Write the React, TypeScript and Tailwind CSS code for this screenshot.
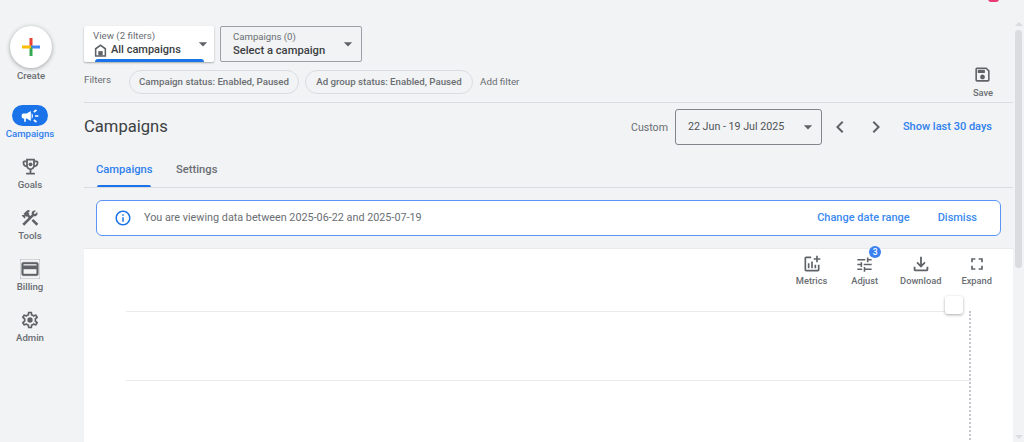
import React from "react";
import {
  MdCampaign,
  MdConstruction,
  MdOutlineCreditCard,
  MdOutlineSave,
  MdOutlineInfo,
  MdOutlineAddchart,
  MdOutlineTune,
  MdOutlineFileDownload,
  MdFullscreen,
  MdChevronLeft,
  MdChevronRight,
  MdArrowDropDown,
} from "react-icons/md";

const font = { fontFamily: "Roboto, sans-serif" };

function Trophy() {
  return (
    <svg width="21" height="21" viewBox="0 0 24 24" fill="currentColor">
      <path d="M19 5h-2V3H7v2H5c-1.1 0-2 .9-2 2v1c0 2.55 1.92 4.63 4.39 4.94.63 1.5 1.98 2.63 3.61 2.96V19H7v2h10v-2h-4v-3.1c1.63-.33 2.98-1.46 3.61-2.96C19.08 12.63 21 10.55 21 8V7c0-1.1-.9-2-2-2zM5 8V7h2v3.82C5.84 10.4 5 9.3 5 8zm7 6c-1.65 0-3-1.35-3-3V5h6v6c0 1.65-1.35 3-3 3zm7-6c0 1.3-.84 2.4-2 2.82V7h2v1z" />
      <circle cx="12" cy="9.5" r="2.2" />
    </svg>
  );
}

function Gear() {
  return (
    <svg width="20" height="20" viewBox="0 0 24 24" fill="currentColor">
      <path d="M19.43 12.98c.04-.32.07-.64.07-.98 0-.34-.03-.66-.07-.98l2.11-1.65c.19-.15.24-.42.12-.64l-2-3.46c-.09-.16-.26-.25-.44-.25-.06 0-.12.01-.17.03l-2.49 1c-.52-.4-1.08-.73-1.69-.98l-.38-2.65C14.46 2.18 14.25 2 14 2h-4c-.25 0-.46.18-.49.42l-.38 2.65c-.61.25-1.17.59-1.69.98l-2.49-1c-.06-.02-.12-.03-.18-.03-.17 0-.34.09-.43.25l-2 3.46c-.13.22-.07.49.12.64l2.11 1.65c-.04.32-.07.65-.07.98 0 .33.03.66.07.98l-2.11 1.65c-.19.15-.24.42-.12.64l2 3.46c.09.16.26.25.44.25.06 0 .12-.01.17-.03l2.49-1c.52.4 1.08.73 1.69.98l.38 2.65c.03.24.24.42.49.42h4c.25 0 .46-.18.49-.42l.38-2.65c.61-.25 1.17-.59 1.69-.98l2.49 1c.06.02.12.03.18.03.17 0 .34-.09.43-.25l2-3.46c.12-.22.07-.49-.12-.64l-2.11-1.65zm-1.98-1.71c.04.31.05.52.05.73 0 .21-.02.43-.05.73l-.14 1.13.89.7 1.08.84-.7 1.21-1.27-.51-1.04-.42-.9.68c-.43.32-.84.56-1.25.73l-1.06.43-.16 1.13-.2 1.35h-1.4l-.19-1.35-.16-1.13-1.06-.43c-.43-.18-.83-.41-1.23-.71l-.91-.7-1.06.43-1.27.51-.7-1.21 1.08-.84.89-.7-.14-1.13c-.03-.31-.05-.54-.05-.74s.02-.43.05-.73l.14-1.13-.89-.7-1.08-.84.7-1.21 1.27.51 1.04.42.9-.68c.43-.32.84-.56 1.25-.73l1.06-.43.16-1.13.2-1.35h1.39l.19 1.35.16 1.13 1.06.43c.43.18.83.41 1.23.71l.91.7 1.06-.43 1.27-.51.7 1.21-1.07.85-.89.7.14 1.13z" />
      <circle cx="12" cy="12" r="3.2" />
    </svg>
  );
}

function Home() {
  return (
    <svg width="15" height="15" viewBox="0 0 24 24" fill="currentColor">
      <path d="M12 2 3 8.5V22h18V8.5L12 2zm6.5 17.5h-13V9.8L12 5l6.5 4.8v9.7z" />
      <rect x="8.5" y="13" width="7" height="7" />
    </svg>
  );
}

function NavItem({ icon, label }: { icon: React.ReactNode; label: string }) {
  return (
    <div className="flex flex-col items-center h-[51px]">
      <div className="h-[21px] mt-[3px] flex items-center justify-center text-[#5f6368]">{icon}</div>
      <div className="mt-[1px] text-[9.6px] leading-[14px] font-medium text-[#6a6e73]">{label}</div>
    </div>
  );
}

function Tool({
  icon,
  label,
  badge,
  labelOffset = "-mt-[1px]",
}: {
  icon: React.ReactNode;
  label: string;
  badge?: string;
  labelOffset?: string;
}) {
  return (
    <div className="relative flex flex-col items-center text-[#5f6368]">
      {badge && (
        <div className="absolute -top-[7px] -right-[3px] w-[12px] h-[12px] rounded-full bg-[#3b82f0] text-white text-[8.5px] leading-[12px] text-center font-medium">
          {badge}
        </div>
      )}
      <div className="h-[22px] flex items-center">{icon}</div>
      <div className={`${labelOffset} text-[9.3px] leading-[14px] font-medium text-[#6a6e73]`}>{label}</div>
    </div>
  );
}

function Chip({ label, w }: { label: string; w: string }) {
  return (
    <div
      className={`${w} h-[24px] rounded-full border border-[#dadce0] flex items-center justify-center text-[9.7px] font-medium text-[#6a6e73]`}
    >
      {label}
    </div>
  );
}

export default function App() {
  return (
    <div className="w-[1024px] h-[442px] overflow-hidden bg-[#f1f3f4] flex relative" style={font}>
      <div className="absolute -top-[4px] left-[988px] w-[11px] h-[6px] rounded-full bg-[#ea3a73]" />

      {/* Left rail */}
      <aside className="w-[84px] shrink-0 flex flex-col">
        <div className="shrink-0 mt-[26px] mx-[10px] w-[42px] h-[42px] rounded-full bg-white shadow-[0_1px_4px_rgba(60,64,67,0.45)] flex items-center justify-center">
          <svg width="18" height="18" viewBox="0 0 18 18">
            <rect x="7.5" y="0" width="3" height="9" fill="#ea4335" />
            <rect x="9" y="7.5" width="9" height="3" fill="#4285f4" />
            <rect x="7.5" y="9" width="3" height="9" fill="#34a853" />
            <rect x="0" y="7.5" width="9" height="3" fill="#fbbc04" />
          </svg>
        </div>
        <div className="w-[62px] text-center mt-[1px] text-[9.6px] leading-[14px] font-medium text-[#6a6e73]">Create</div>
        <div className="w-[60px] flex flex-col items-center mt-[22px]">
          <div className="w-[36px] h-[21px] rounded-full bg-[#1a73e8] flex items-center justify-center text-white">
            <MdCampaign size={20} />
          </div>
          <div className="mt-[1px] text-[9.6px] leading-[14px] font-medium text-[#2f80ed]">Campaigns</div>
        </div>
        <div className="w-[60px] flex flex-col mt-[12px]">
          <NavItem icon={<Trophy />} label="Goals" />
          <NavItem icon={<MdConstruction size={20} />} label="Tools" />
          <NavItem icon={<MdOutlineCreditCard size={20} strokeWidth={0.5} />} label="Billing" />
          <NavItem icon={<Gear />} label="Admin" />
        </div>
      </aside>

      {/* Main */}
      <main className="w-[929px] shrink-0 flex flex-col">
        <div className="shrink-0 mt-[26px] flex gap-[6px] h-[36px]">
          <div className="relative w-[130px] h-[36px] bg-white rounded-[2px] shadow-[0_1px_2px_rgba(60,64,67,0.4)] overflow-hidden">
            <div className="pl-[9px] pt-[4px] text-[9.7px] leading-[12px] text-[#6a6e73]">View (2 filters)</div>
            <div className="pl-[9px] flex items-center gap-[3px] text-[11px] leading-[16px] font-medium text-[#3c4043]">
              <span className="text-[#5f6368] flex"><Home /></span>
              All campaigns
            </div>
            <MdArrowDropDown size={20} className="absolute right-[1px] top-[8px] text-[#5f6368]" />
            <div className="absolute left-[11px] bottom-0 w-[109px] h-[3px] rounded-t bg-[#1a73e8]" />
          </div>
          <div className="relative w-[142px] h-[36px] rounded-[2px] border border-[#9aa0a6]">
            <div className="pl-[12px] pt-[4px] text-[9.6px] leading-[12px] text-[#6a6e73]">Campaigns (0)</div>
            <div className="pl-[12px] text-[11.2px] leading-[16px] font-medium text-[#3c4043]">Select a campaign</div>
            <MdArrowDropDown size={20} className="absolute right-[3px] top-[7px] text-[#5f6368]" />
          </div>
        </div>

        <div className="shrink-0 mt-[8px] h-[33px] border-b border-[#dadce0] flex">
          <div className="text-[9.8px] leading-[14px] text-[#6a6e73] mt-[3px] w-[45px]">Filters</div>
          <div className="flex gap-[6px] items-start">
            <Chip label="Campaign status: Enabled, Paused" w="w-[170px]" />
            <Chip label="Ad group status: Enabled, Paused" w="w-[168px]" />
            <div className="ml-[1px] text-[9.8px] leading-[24px] text-[#6a6e73]">Add filter</div>
          </div>
          <div className="ml-auto mr-[20px] -mt-[7px]">
            <Tool icon={<MdOutlineSave size={19} />} label="Save" labelOffset="mt-[1px]" />
          </div>
        </div>

        <div className="shrink-0 h-[48px] pr-[21px] flex items-center">
          <div className="mt-[1px] text-[16.6px] font-normal text-[#3c4043]">Campaigns</div>
          <div className="ml-auto flex items-center text-[#5f6368]">
            <span className="mt-[1px] text-[10.6px] mr-[7px] text-[#6a6e73]">Custom</span>
            <div className="w-[147px] h-[36px] rounded-[3px] border border-[#80868b] flex items-center pl-[12px] text-[10.7px] text-[#4f5256]">
              <span className="mt-[1px]">22 Jun - 19 Jul 2025</span>
              <MdArrowDropDown size={20} className="ml-auto mr-[3px] text-[#5f6368]" />
            </div>
            <MdChevronLeft size={24} className="ml-[6px]" />
            <MdChevronRight size={24} className="ml-[12px]" />
            <span className="mt-[1px] ml-[15px] text-[11px] font-medium text-[#2f80ed]">Show last 30 days</span>
          </div>
        </div>

        <div className="shrink-0 h-[37px] border-b border-[#dadce0] flex text-[11.2px] font-medium">
          <div className="relative ml-[12px] w-[56px] text-center pt-[1px] leading-[36px] text-[#2f80ed]">
            Campaigns
            <div className="absolute bottom-0 left-[1px] right-[1px] h-[2px] rounded-t bg-[#1a73e8]" />
          </div>
          <div className="ml-[24px] pt-[1px] leading-[36px] text-[#6a6e73]">Settings</div>
        </div>

        <div className="shrink-0 mt-[12px] ml-[12px] w-[905px] h-[36px] bg-white border border-[#5a95f5] rounded-[6px] flex items-center text-[11px]">
          <MdOutlineInfo size={18} className="ml-[17px] text-[#1a73e8]" />
          <span className="ml-[12px] text-[10.8px] text-[#6a6e73]">You are viewing data between 2025-06-22 and 2025-07-19</span>
          <span className="ml-auto font-medium text-[#3b8af0]">Change date range</span>
          <span className="ml-[28px] mr-[23px] font-medium text-[#3b8af0]">Dismiss</span>
        </div>

        <div className="shrink-0 mt-[12px] h-[194px] bg-white border-t border-[#e8eaed] flex flex-col">
          <div className="flex justify-end pt-[4px] pr-[21px]">
            <Tool icon={<MdOutlineAddchart size={20} />} label="Metrics" />
            <div className="ml-[24px]">
              <Tool icon={<MdOutlineTune size={19} />} label="Adjust" badge="3" />
            </div>
            <div className="ml-[22px]">
              <Tool icon={<MdOutlineFileDownload size={22} />} label="Download" />
            </div>
            <div className="ml-[20px]">
              <Tool icon={<MdFullscreen size={20} />} label="Expand" />
            </div>
          </div>
          <div className="relative ml-[42px] mt-[23px] w-[845px] h-[140px]">
            <div className="h-[69px] w-[820px] border-t border-[#e8eaed]" />
            <div className="border-t border-[#e8eaed]" />
            <div className="absolute right-0 top-0 h-[140px] border-r-2 border-dotted border-[#c4c7cb]" />
            <div className="absolute right-[8px] -top-[15px] w-[18px] h-[18px] bg-white rounded-[3px] shadow-[0_1px_3px_rgba(60,64,67,0.45)]" />
          </div>
        </div>
      </main>

      {/* Scrollbar */}
      <div className="w-[11px] shrink-0 relative">
        <div className="mt-[22px] ml-[2px] w-0 h-0 border-x-[4px] border-x-transparent border-b-[4px] border-b-[#dadce0]" />
        <div className="mt-[4px] ml-[2px] w-[7px] h-[238px] rounded-full bg-[#dadce0]" />
        <div className="mt-[167px] ml-[2px] w-0 h-0 border-x-[4px] border-x-transparent border-t-[4px] border-t-[#dadce0]" />
      </div>
    </div>
  );
}
